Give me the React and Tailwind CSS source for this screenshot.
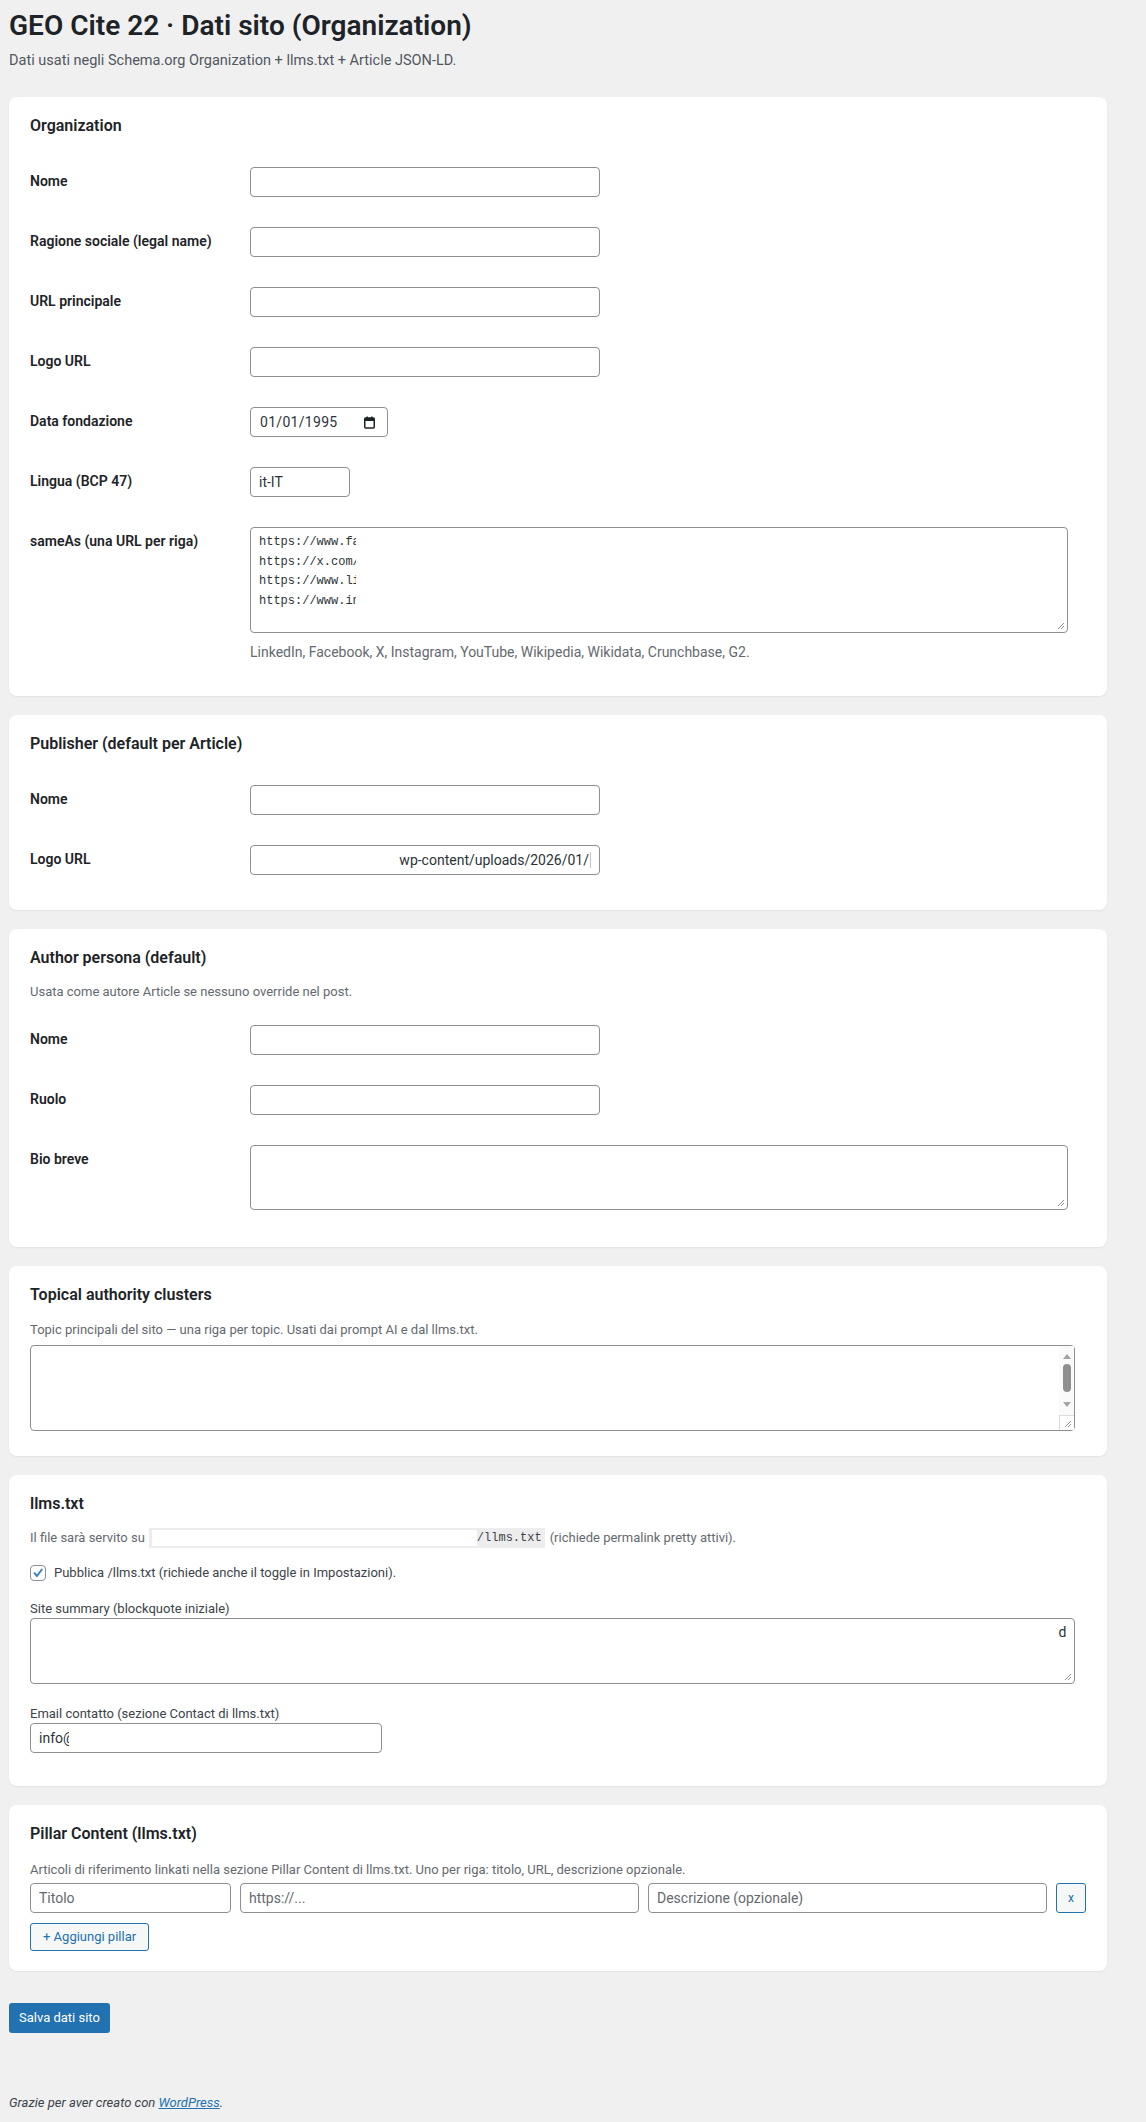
import React from "react";

const Grip = () => (
  <svg className="absolute bottom-[2px] right-[2px]" width="9" height="9" viewBox="0 0 9 9">
    <path d="M8 2 L2 8 M8 5 L5 8" stroke="#8c8f94" strokeWidth="1" fill="none" />
  </svg>
);

const Card = ({ title, className = "", children }) => (
  <div className={"rounded-lg bg-white px-[21px] pt-[19px] shadow-[0_1px_2px_rgba(0,0,0,0.06)] " + className}>
    <h2 className="text-[16px] font-semibold leading-[20px] text-[#1d2327]">{title}</h2>
    {children}
  </div>
);

const Row = ({ label, children }) => (
  <div className="flex items-start">
    <div className="w-[210px] shrink-0 pr-[10px] pt-[20px] text-[14px] font-semibold leading-[18px] text-[#1d2327]">
      {label}
    </div>
    <div className="flex-1 px-[10px] py-[15px]">{children}</div>
  </div>
);

const Input = ({ className = "w-[350px]", ...props }) => (
  <input
    readOnly
    className={
      "h-[30px] rounded-[4px] border border-[#8c8f94] bg-white px-2 text-[14px] text-[#2c3338] placeholder:text-[#646970] outline-none " +
      className
    }
    {...props}
  />
);

const Area = ({ className = "", children }) => (
  <div className={"relative rounded-[4px] border border-[#8c8f94] bg-white " + className}>
    {children}
    <Grip />
  </div>
);

const Desc = ({ className = "", children }) => (
  <p className={"text-[13px] leading-[18px] text-[#646970] " + className}>{children}</p>
);

const sameAs = ["https://www.fa", "https://x.com/", "https://www.li", "https://www.in"];

export default function App() {
  return (
    <div className="min-h-[2122px] bg-[#f0f0f1] pl-[9px] pr-[39px] pt-[9px] font-['Roboto','Noto_Sans',sans-serif] text-[13px] text-[#3c434a]">
      <h1 className="text-[28px] font-semibold leading-[34px] text-[#1d2327]">
        GEO Cite 22 · Dati sito (Organization)
      </h1>
      <p className="mt-[8px] text-[14.5px] leading-[20px] text-[#50575e]">
        Dati usati negli Schema.org Organization + llms.txt + Article JSON-LD.
      </p>

      <div className="mt-[26px] flex flex-col gap-[19px]">
        <Card title="Organization" className="pb-5">
          <div className="mt-4">
            <Row label="Nome">
              <Input />
            </Row>
            <Row label="Ragione sociale (legal name)">
              <Input />
            </Row>
            <Row label="URL principale">
              <Input />
            </Row>
            <Row label="Logo URL">
              <Input />
            </Row>
            <Row label="Data fondazione">
              <div className="flex h-[30px] w-[138px] items-center justify-between rounded-[4px] border border-[#8c8f94] bg-white pl-[9px] pr-[12px] text-[14px] tracking-[0.3px] text-[#2c3338]">
                <span>01/01/1995</span>
                <svg width="11" height="13" viewBox="0 0 11 13">
                  <rect x="0.75" y="2" width="9.5" height="10" rx="1" fill="none" stroke="#1d2327" strokeWidth="1.5" />
                  <rect x="0.75" y="2" width="9.5" height="3" fill="#1d2327" />
                  <rect x="2.5" y="0.5" width="1.4" height="2.5" fill="#1d2327" />
                  <rect x="7.1" y="0.5" width="1.4" height="2.5" fill="#1d2327" />
                </svg>
              </div>
            </Row>
            <Row label="Lingua (BCP 47)">
              <Input defaultValue="it-IT" className="w-[100px]" />
            </Row>
            <Row label="sameAs (una URL per riga)">
              <Area className="h-[106px] w-[99%] px-2 pt-[5px]">
                {sameAs.map((s) => (
                  <div
                    key={s}
                    className="w-[97px] overflow-hidden whitespace-nowrap font-['Liberation_Mono',monospace] text-[12px] leading-[19.5px] text-[#2c3338]"
                  >
                    {s}
                  </div>
                ))}
              </Area>
              <p className="mt-[10px] text-[14px] leading-[18px] text-[#646970]">
                LinkedIn, Facebook, X, Instagram, YouTube, Wikipedia, Wikidata, Crunchbase, G2.
              </p>
            </Row>
          </div>
        </Card>

        <Card title="Publisher (default per Article)" className="pb-5">
          <div className="mt-4">
            <Row label="Nome">
              <Input />
            </Row>
            <Row label="Logo URL">
              <div className="flex h-[30px] w-[350px] items-center justify-end overflow-hidden rounded-[4px] border border-[#8c8f94] bg-white px-2 text-[14px] text-[#2c3338]">
                <span className="whitespace-nowrap">wp-content/uploads/2026/01/</span>
                <span className="ml-[1px] inline-block h-[16px] w-[1px] bg-[#c3c4c7]" />
              </div>
            </Row>
          </div>
        </Card>

        <Card title="Author persona (default)" className="pb-[22px]">
          <Desc className="mt-[15px]">Usata come autore Article se nessuno override nel post.</Desc>
          <div className="mt-[9px]">
            <Row label="Nome">
              <Input />
            </Row>
            <Row label="Ruolo">
              <Input />
            </Row>
            <Row label="Bio breve">
              <Area className="h-[65px] w-[99%]" />
            </Row>
          </div>
        </Card>

        <Card title="Topical authority clusters" className="pb-[25px]">
          <Desc className="mt-4">
            Topic principali del sito — una riga per topic. Usati dai prompt AI e dal llms.txt.
          </Desc>
          <div className="relative mt-[6px] h-[86px] w-[99%] rounded-[4px] border border-[#8c8f94] bg-white">
            <div className="absolute right-0 top-0 flex h-full w-[15px] flex-col items-center bg-[#fafafa]">
              <div className="mt-[8px] h-0 w-0 border-x-[4px] border-b-[5px] border-x-transparent border-b-[#a3a3a3]" />
              <div className="mt-[5px] h-[28px] w-[8px] rounded-full bg-[#8f8f8f]" />
              <div className="mt-[10px] h-0 w-0 border-x-[4px] border-t-[5px] border-x-transparent border-t-[#a3a3a3]" />
              <div className="relative mt-auto h-[15px] w-[15px] border-l border-t border-[#dcdcde] bg-white">
                <Grip />
              </div>
            </div>
          </div>
        </Card>

        <Card title="llms.txt" className="pb-[33px]">
          <p className="mt-[14px] flex items-center leading-[20px] text-[#646970]">
            <span>Il file sarà servito su</span>
            <span className="ml-[4px] flex h-[20px] items-center bg-[#ededed] px-[3px]">
              <span className="inline-block h-[16px] w-[325px] bg-white" />
              <span className="font-['Liberation_Mono',monospace] text-[12px] text-[#3c434a]">/llms.txt</span>
            </span>
            <span className="ml-[5px]">(richiede permalink pretty attivi).</span>
          </p>
          <label className="mt-[15px] flex items-center gap-[8px] leading-[20px] text-[#3c434a]">
            <span className="flex h-4 w-4 items-center justify-center rounded-[4px] border border-[#8c8f94] bg-white">
              <svg width="12" height="12" viewBox="0 0 12 12">
                <path d="M2.5 6.2 L5 9 L9.8 2.5" stroke="#3582c4" strokeWidth="2" fill="none" strokeLinecap="round" strokeLinejoin="round" />
              </svg>
            </span>
            Pubblica /llms.txt (richiede anche il toggle in Impostazioni).
          </label>
          <div className="mt-[17px] leading-[18px]">Site summary (blockquote iniziale)</div>
          <Area className="h-[66px] w-[99%] px-2 pt-[3px] text-right text-[14px] leading-[20px] text-[#2c3338]">
            d
          </Area>
          <div className="mt-[21px] leading-[18px]">Email contatto (sezione Contact di llms.txt)</div>
          <div className="flex h-[30px] w-[352px] items-center rounded-[4px] border border-[#8c8f94] bg-white px-2 text-[14px] text-[#2c3338]">
            info<span className="inline-block w-[6px] overflow-hidden">@</span>
          </div>
        </Card>

        <Card title="Pillar Content (llms.txt)" className="pb-5">
          <Desc className="mt-[17px]">
            Articoli di riferimento linkati nella sezione Pillar Content di llms.txt. Uno per riga: titolo, URL, descrizione opzionale.
          </Desc>
          <div className="mt-[4px] flex gap-[9px]">
            <Input placeholder="Titolo" className="w-[201px]" />
            <Input placeholder="https://..." className="min-w-0 flex-1" />
            <Input placeholder="Descrizione (opzionale)" className="min-w-0 flex-1" />
            <button className="h-[30px] w-[30px] rounded-[3px] border border-[#2271b1] bg-[#f6f7f7] text-[12px] text-[#2271b1]">
              x
            </button>
          </div>
          <button className="mt-[10px] h-[28px] rounded-[3px] border border-[#2271b1] bg-[#f6f7f7] px-[12px] text-[13px] text-[#2271b1]">
            + Aggiungi pillar
          </button>
        </Card>
      </div>

      <button className="mt-[32px] h-[30px] rounded-[3px] bg-[#2271b1] px-[10px] text-[13px] text-white">
        Salva dati sito
      </button>

      <p className="mt-[61px] italic leading-[18px] text-[#3c434a]">
        Grazie per aver creato con{" "}
        <a className="text-[#2271b1] underline">WordPress</a>.
      </p>
    </div>
  );
}
